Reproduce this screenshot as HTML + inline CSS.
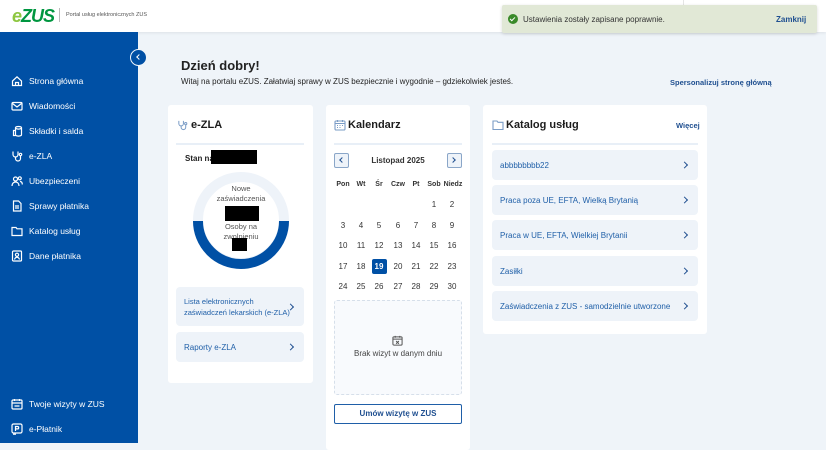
<!DOCTYPE html>
<html><head><meta charset="utf-8"><style>
*{box-sizing:border-box;margin:0;padding:0}
body{width:826px;height:443px;overflow:hidden;background:#eff4f9;font-family:"Liberation Sans",sans-serif;position:relative;color:#222}
.a{position:absolute}
#hdr{left:0;top:0;width:826px;height:32px;background:#fff;box-shadow:0 1px 3px rgba(0,0,0,.08)}
#side{left:0;top:32px;width:138px;height:411px;background:#0050a5}
.ni{position:absolute;left:11px;color:#fff;font-size:8.5px;display:flex;align-items:center;gap:6px;height:12px}
.ni svg{width:12px;height:12px;flex:none}
.card{position:absolute;background:#fff;border-radius:3px}
.ttl{font-weight:bold;font-size:11px;color:#1c1c1c}
.item{position:absolute;background:#eef3f9;border-radius:4px;color:#1f5fa8;font-size:8px;display:flex;align-items:center;padding-left:8px}
.item:after{content:"";position:absolute;right:11px;top:50%;width:4px;height:4px;border-top:1.8px solid #1f4f90;border-right:1.8px solid #1f4f90;transform:translateY(-50%) rotate(45deg)}
.cd{position:absolute;width:16px;text-align:center;font-size:8px;color:#333}
.blk{position:absolute;background:#000}
</style></head><body>
<div id="hdr" class="a">
  <div class="a" style="left:12px;top:6px;font-size:18px;font-weight:bold;letter-spacing:-1px;font-style:italic"><span style="color:#8dc63f">e</span><span style="color:#009640">ZUS</span></div>
  <div class="a" style="left:59px;top:8px;width:1px;height:14px;background:#bbb"></div>
  <div class="a" style="left:66px;top:12px;font-size:5.5px;color:#555">Portal usług elektronicznych ZUS</div>
  <div class="a" style="left:683px;top:0;width:1px;height:32px;background:#e5e5e5"></div>
</div>
<div id="side" class="a">
  <div class="ni" style="top:43px"><svg viewBox="0 0 12 12" fill="none" stroke="#fff" stroke-width="1.2"><path d="M1.5 6L6 1.8 10.5 6V10.5H1.5Z"/><path d="M4.5 10.5V7.5h3v3"/></svg>Strona główna</div>
  <div class="ni" style="top:68px"><svg viewBox="0 0 12 12" fill="none" stroke="#fff" stroke-width="1.2"><rect x="1" y="2.5" width="10" height="7.5" rx="1"/><path d="M1.5 3.5L6 7l4.5-3.5"/></svg>Wiadomości</div>
  <div class="ni" style="top:93px"><svg viewBox="0 0 12 12" fill="none" stroke="#fff" stroke-width="1.2"><ellipse cx="7.5" cy="2.8" rx="3" ry="1.3"/><path d="M4.5 2.8v7c0 .7 1.3 1.3 3 1.3s3-.6 3-1.3v-7"/><path d="M4.5 5.5H2.5v5h2"/></svg>Składki i salda</div>
  <div class="ni" style="top:118px"><svg viewBox="0 0 12 12" fill="none" stroke="#fff" stroke-width="1.2"><path d="M2 1.5v3a2.5 2.5 0 005 0v-3"/><path d="M4.5 7v1.5a2.5 2.5 0 005 0V6"/><circle cx="9.5" cy="4.5" r="1.2"/></svg>e-ZLA</div>
  <div class="ni" style="top:143px"><svg viewBox="0 0 12 12" fill="none" stroke="#fff" stroke-width="1.2"><circle cx="4.5" cy="4" r="2"/><path d="M1 11c0-2.5 1.5-4 3.5-4s3.5 1.5 3.5 4"/><circle cx="8.8" cy="3.3" r="1.5"/><path d="M9 6.5c1.5 0 2.3 1.2 2.3 3"/></svg>Ubezpieczeni</div>
  <div class="ni" style="top:168px"><svg viewBox="0 0 12 12" fill="none" stroke="#fff" stroke-width="1.2"><path d="M2.5 1h5l2.5 2.5V11h-7.5Z"/><path d="M4 6h4M4 8h4"/></svg>Sprawy płatnika</div>
  <div class="ni" style="top:193px"><svg viewBox="0 0 12 12" fill="none" stroke="#fff" stroke-width="1.2"><path d="M1 2.5h4l1 1.3h5V10.5H1Z"/></svg>Katalog usług</div>
  <div class="ni" style="top:218px"><svg viewBox="0 0 12 12" fill="none" stroke="#fff" stroke-width="1.2"><rect x="1.5" y="1" width="9" height="10" rx="1"/><circle cx="6" cy="4.8" r="1.6"/><path d="M3.5 9.5c.4-1.5 1.3-2.2 2.5-2.2s2.1.7 2.5 2.2"/></svg>Dane płatnika</div>
  <div class="ni" style="top:366px"><svg viewBox="0 0 12 12" fill="none" stroke="#fff" stroke-width="1.2"><rect x="1" y="2" width="10" height="9" rx="1"/><path d="M1 5h10M3.5 1v2M8.5 1v2M3.5 8h5"/></svg>Twoje wizyty w ZUS</div>
  <div class="ni" style="top:391px"><svg viewBox="0 0 12 12" fill="none" stroke="#fff" stroke-width="1.2"><rect x="1" y="1" width="10" height="9" rx="1.5"/><path d="M4.5 8V3.5h2a1.2 1.2 0 010 2.4h-2"/><path d="M2 11.2h3"/></svg>e-Płatnik</div>
</div>
<div class="a" style="left:130px;top:49px;width:17px;height:17px;border-radius:50%;background:#0050a5;border:1.5px solid #eff4f9"></div>
<div class="a" style="left:137px;top:55px;width:4px;height:4px;border-left:1.3px solid #fff;border-bottom:1.3px solid #fff;transform:rotate(45deg)"></div>

<div class="a" style="left:181px;top:58px;font-size:13px;font-weight:bold;color:#222">Dzień dobry!</div>
<div class="a" style="left:181px;top:77px;font-size:8px;color:#222">Witaj na portalu eZUS. Załatwiaj sprawy w ZUS bezpiecznie i wygodnie – gdziekolwiek jesteś.</div>
<div class="a" style="left:670px;top:78px;font-size:7.5px;font-weight:bold;color:#1f4f90">Spersonalizuj stronę główną</div>

<div class="a" style="left:502px;top:5px;width:315px;height:28px;background:#e1e8d6;border-radius:2px;box-shadow:0 1px 3px rgba(0,0,0,.15)"></div>
<div class="a" style="left:508px;top:14px;width:10px;height:10px;border-radius:50%;background:#3a8a2a"></div>
<div class="a" style="left:511px;top:16px;width:3px;height:5px;border-right:1.3px solid #fff;border-bottom:1.3px solid #fff;transform:rotate(45deg)"></div>
<div class="a" style="left:523px;top:15px;font-size:8px;color:#333">Ustawienia zostały zapisane poprawnie.</div>
<div class="a" style="left:776px;top:15px;font-size:8px;font-weight:bold;color:#1f4f90">Zamknij</div>

<div class="card" style="left:168px;top:105px;width:145px;height:278px">
  <svg class="a" style="left:9px;top:14px" width="11" height="12" viewBox="0 0 12 12" fill="none" stroke="#7a9cc6" stroke-width="1.1"><path d="M2 1.5v3a2.5 2.5 0 005 0v-3"/><path d="M4.5 7v1.5a2.5 2.5 0 005 0V6"/><circle cx="9.5" cy="4.5" r="1.2"/></svg>
  <div class="a ttl" style="left:23px;top:14px">e-ZLA</div>
  <div class="a" style="left:8px;top:38px;width:128px;height:1.5px;background:#e8eff7"></div>
  <div class="a" style="left:17px;top:49px;font-size:8px;font-weight:bold">Stan na</div>
  <div class="blk" style="left:43px;top:45px;width:46px;height:14px"></div>
  <svg class="a" style="left:24px;top:66px" width="98" height="98" viewBox="0 0 98 98"><circle cx="49" cy="49" r="43" fill="none" stroke="#eef3f9" stroke-width="10"/><path d="M6 50A43 43 0 0 0 92 50" fill="none" stroke="#0050a5" stroke-width="10"/></svg>
  <div class="a" style="left:40px;top:79px;width:66px;text-align:center;font-size:7.5px;color:#555;line-height:10px">Nowe zaświadczenia</div>
  <div class="blk" style="left:57px;top:101px;width:34px;height:15px"></div>
  <div class="a" style="left:40px;top:117px;width:66px;text-align:center;font-size:7.5px;color:#555;line-height:10px">Osoby na zwolnieniu</div>
  <div class="blk" style="left:64px;top:133px;width:15px;height:13px"></div>
  <div class="item" style="left:8px;top:182px;width:128px;height:39px;line-height:11px;padding-right:14px;font-size:7.5px;white-space:nowrap"><span>Lista elektronicznych<br>zaświadczeń lekarskich (e-ZLA)</span></div>
  <div class="item" style="left:8px;top:227px;width:128px;height:30px">Raporty e-ZLA</div>
</div>

<div class="card" style="left:326px;top:105px;width:144px;height:345px">
  <svg class="a" style="left:8px;top:14px" width="12" height="12" viewBox="0 0 12 12" fill="none" stroke="#7a9cc6" stroke-width="1.1"><rect x="1" y="2" width="10" height="9" rx="1"/><path d="M1 4.5h10M3.5 1v2M8.5 1v2M3 6.5h1M5.5 6.5h1M8 6.5h1M3 8.5h1M5.5 8.5h1"/></svg>
  <div class="a ttl" style="left:22px;top:14px">Kalendarz</div>
  <div class="a" style="left:8px;top:38px;width:128px;height:1.5px;background:#e8eff7"></div>
  <div class="a" style="left:8px;top:48px;width:15px;height:15px;border:1.2px solid #8aa6c8;border-radius:2px;background:#eef3f9"></div>
  <div class="a" style="left:14px;top:53px;width:4px;height:4px;border-left:1.4px solid #1f4f90;border-bottom:1.4px solid #1f4f90;transform:rotate(45deg)"></div>
  <div class="a" style="left:121px;top:48px;width:15px;height:15px;border:1.2px solid #8aa6c8;border-radius:2px;background:#eef3f9"></div>
  <div class="a" style="left:125px;top:53px;width:4px;height:4px;border-right:1.4px solid #1f4f90;border-top:1.4px solid #1f4f90;transform:rotate(45deg)"></div>
  <div class="a" style="left:0;top:51px;width:144px;text-align:center;font-size:8px;font-weight:bold;color:#333">Listopad 2025</div>
  <div class="a" style="left:0;top:0">
    <div class="cd" style="left:9px;top:76px;font-size:7px;font-weight:bold">Pon</div>
    <div class="cd" style="left:27px;top:76px;font-size:7px;font-weight:bold">Wt</div>
    <div class="cd" style="left:45px;top:76px;font-size:7px;font-weight:bold">Śr</div>
    <div class="cd" style="left:64px;top:76px;font-size:7px;font-weight:bold">Czw</div>
    <div class="cd" style="left:82px;top:76px;font-size:7px;font-weight:bold">Pt</div>
    <div class="cd" style="left:100px;top:76px;font-size:7px;font-weight:bold">Sob</div>
    <div class="cd" style="left:117px;top:76px;font-size:7px;font-weight:bold;width:20px">Niedz</div>
    <div class="cd" style="left:100px;top:95px">1</div><div class="cd" style="left:118px;top:95px">2</div>
    <div class="cd" style="left:9px;top:116px">3</div><div class="cd" style="left:27px;top:116px">4</div><div class="cd" style="left:45px;top:116px">5</div><div class="cd" style="left:64px;top:116px">6</div><div class="cd" style="left:82px;top:116px">7</div><div class="cd" style="left:100px;top:116px">8</div><div class="cd" style="left:118px;top:116px">9</div>
    <div class="cd" style="left:9px;top:136px">10</div><div class="cd" style="left:27px;top:136px">11</div><div class="cd" style="left:45px;top:136px">12</div><div class="cd" style="left:64px;top:136px">13</div><div class="cd" style="left:82px;top:136px">14</div><div class="cd" style="left:100px;top:136px">15</div><div class="cd" style="left:118px;top:136px">16</div>
    <div class="a" style="left:46px;top:154px;width:15px;height:15px;background:#0050a5;border-radius:2px"></div>
    <div class="cd" style="left:9px;top:157px">17</div><div class="cd" style="left:27px;top:157px">18</div><div class="cd" style="left:45px;top:157px;color:#fff;font-weight:bold">19</div><div class="cd" style="left:64px;top:157px">20</div><div class="cd" style="left:82px;top:157px">21</div><div class="cd" style="left:100px;top:157px">22</div><div class="cd" style="left:118px;top:157px">23</div>
    <div class="cd" style="left:9px;top:177px">24</div><div class="cd" style="left:27px;top:177px">25</div><div class="cd" style="left:45px;top:177px">26</div><div class="cd" style="left:64px;top:177px">27</div><div class="cd" style="left:82px;top:177px">28</div><div class="cd" style="left:100px;top:177px">29</div><div class="cd" style="left:118px;top:177px">30</div>
  </div>
  <div class="a" style="left:8px;top:195px;width:128px;height:95px;border:1px dashed #d6dfea;border-radius:3px;background:#f8fafd"></div>
  <svg class="a" style="left:66px;top:230px" width="11" height="11" viewBox="0 0 12 12" fill="none" stroke="#555" stroke-width="1.1"><rect x="1" y="2" width="10" height="9" rx="1"/><path d="M1 4.5h10M3.5 1v2M8.5 1v2M4.5 6.5l3 3M7.5 6.5l-3 3"/></svg>
  <div class="a" style="left:0;top:244px;width:144px;text-align:center;font-size:8px;color:#444">Brak wizyt w danym dniu</div>
  <div class="a" style="left:8px;top:299px;width:128px;height:20px;border:1.5px solid #1f5fa8;border-radius:2px;text-align:center;font-size:8px;font-weight:bold;color:#1f4f90;line-height:17px">Umów wizytę w ZUS</div>
</div>

<div class="card" style="left:483px;top:105px;width:224px;height:229px">
  <svg class="a" style="left:9px;top:14px" width="12" height="12" viewBox="0 0 12 12" fill="none" stroke="#7a9cc6" stroke-width="1.1"><path d="M1 2h4l1 1.3h5V10.5H1Z"/></svg>
  <div class="a ttl" style="left:23px;top:14px">Katalog usług</div>
  <div class="a" style="left:193px;top:16px;font-size:7.5px;font-weight:bold;color:#1f4f90">Więcej</div>
  <div class="a" style="left:9px;top:38px;width:206px;height:1.5px;background:#e8eff7"></div>
  <div class="item" style="left:9px;top:45px;width:206px;height:30px">abbbbbbbb22</div>
  <div class="item" style="left:9px;top:80px;width:206px;height:30px">Praca poza UE, EFTA, Wielką Brytanią</div>
  <div class="item" style="left:9px;top:115px;width:206px;height:30px">Praca w UE, EFTA, Wielkiej Brytanii</div>
  <div class="item" style="left:9px;top:151px;width:206px;height:30px">Zasiłki</div>
  <div class="item" style="left:9px;top:186px;width:206px;height:30px">Zaświadczenia z ZUS - samodzielnie utworzone</div>
</div>
</body></html>
